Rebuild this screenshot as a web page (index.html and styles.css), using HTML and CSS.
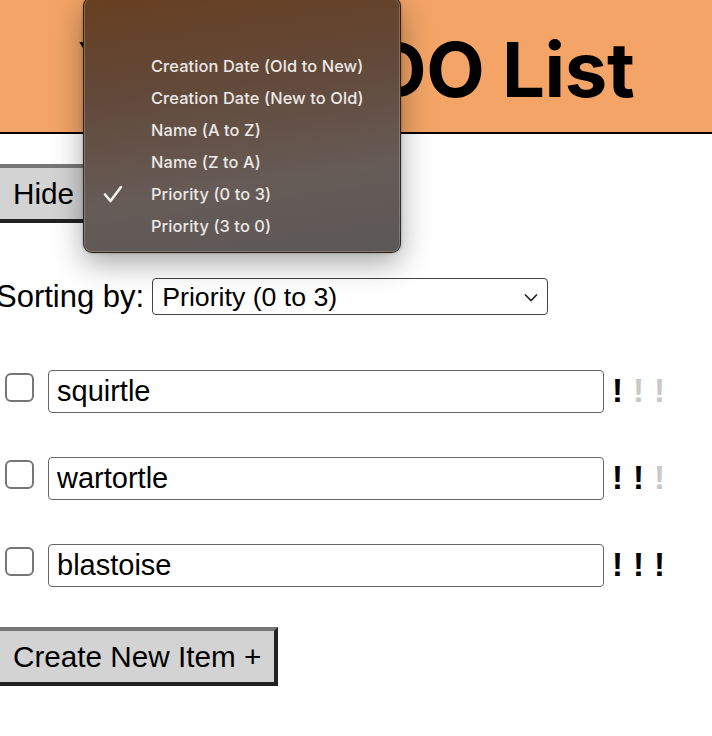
FILE: index.html
```html
<!DOCTYPE html>
<html lang="en">
<head>
<meta charset="utf-8">
<title>Your TODO List</title>
<link rel="stylesheet" href="styles.css">
</head>
<body>
<header class="header">
  <h1 class="title">Your TODO List</h1>
</header>
<main class="main">
  <button class="btn btn-hide">Hide Completed</button>
  <div class="sort-row">
    <label class="sort-label" for="sort">Sorting by:</label>
    <div class="select-wrap">
      <select id="sort" class="select">
        <option>Creation Date (Old to New)</option>
        <option>Creation Date (New to Old)</option>
        <option>Name (A to Z)</option>
        <option>Name (Z to A)</option>
        <option selected>Priority (0 to 3)</option>
        <option>Priority (3 to 0)</option>
      </select>
      <svg class="chevron" width="14" height="9" viewBox="0 0 14 9"><path d="M1 1.5 L7 7.5 L13 1.5" fill="none" stroke="#222" stroke-width="1.6"/></svg>
    </div>
  </div>
  <ul class="list">
    <li class="item">
      <input type="checkbox" class="check">
      <input type="text" class="text" value="squirtle">
      <span class="prio"><b class="mark on">!</b><b class="mark">!</b><b class="mark">!</b></span>
    </li>
    <li class="item">
      <input type="checkbox" class="check">
      <input type="text" class="text" value="wartortle">
      <span class="prio"><b class="mark on">!</b><b class="mark on">!</b><b class="mark">!</b></span>
    </li>
    <li class="item">
      <input type="checkbox" class="check">
      <input type="text" class="text" value="blastoise">
      <span class="prio"><b class="mark on">!</b><b class="mark on">!</b><b class="mark on">!</b></span>
    </li>
  </ul>
  <button class="btn btn-create">Create New Item +</button>
</main>
<div class="menu" role="listbox">
  <div class="menu-item"><span class="tick"></span>Creation Date (Old to New)</div>
  <div class="menu-item"><span class="tick"></span>Creation Date (New to Old)</div>
  <div class="menu-item"><span class="tick"></span>Name (A to Z)</div>
  <div class="menu-item"><span class="tick"></span>Name (Z to A)</div>
  <div class="menu-item"><span class="tick"><svg width="20" height="18" viewBox="0 0 20 18"><path d="M2 9.5 L7.5 16 L18 2" fill="none" stroke="#f2efec" stroke-width="2.6" stroke-linecap="round" stroke-linejoin="round"/></svg></span>Priority (0 to 3)</div>
  <div class="menu-item"><span class="tick"></span>Priority (3 to 0)</div>
</div>
</body>
</html>
```
FILE: styles.css
```css
html, body {
  margin: 0;
  padding: 0;
  background: #fff;
  overflow: hidden;
  width: 712px;
  height: 736px;
}
body {
  position: relative;
  font-family: "Liberation Sans", Arial, sans-serif;
  color: #000;
}
.header {
  height: 134px;
  background: #f3a466;
  border-bottom: 2px solid #000;
  display: flex;
  align-items: center;
  justify-content: center;
  padding-top: 6px;
  box-sizing: border-box;
}
.title {
  margin: 0;
  font-family: Inter, "Noto Sans", sans-serif;
  font-weight: 700;
  font-size: 76px;
  line-height: 1;
  letter-spacing: -0.4px;
  white-space: nowrap;
}
.main {
  margin-left: -4px;
  padding-top: 30px;
  display: flex;
  flex-direction: column;
  align-items: flex-start;
}
.btn {
  font-family: "Liberation Sans", Arial, sans-serif;
  font-size: 29.7px;
  line-height: 33px;
  padding: 9px 13px;
  background: #d3d3d3;
  color: #000;
  border: 4px solid;
  border-color: #777 #222 #222 #777;
  white-space: nowrap;
}
.sort-row {
  margin-top: 55px;
  display: flex;
  align-items: center;
  gap: 8px;
}
.sort-label {
  font-size: 31px;
}
.select-wrap {
  position: relative;
}
.select {
  appearance: none;
  -webkit-appearance: none;
  width: 396px;
  height: 37px;
  box-sizing: border-box;
  border: 1px solid #444;
  border-radius: 4px;
  background: #fff;
  font-family: "Liberation Sans", Arial, sans-serif;
  font-size: 26.7px;
  padding: 0 0 0 9px;
  color: #000;
}
.chevron {
  position: absolute;
  right: 10px;
  top: 15px;
  pointer-events: none;
}
.list {
  list-style: none;
  margin: 55px 0 0 0;
  padding: 0;
  display: flex;
  flex-direction: column;
  gap: 44px;
}
.item {
  display: flex;
  align-items: flex-start;
}
.check {
  appearance: none;
  -webkit-appearance: none;
  width: 29px;
  height: 29px;
  margin: 3px 0 0 9px;
  box-sizing: border-box;
  border: 2px solid #767676;
  border-radius: 6px;
  background: #fff;
}
.text {
  margin-left: 14px;
  width: 556px;
  height: 43px;
  box-sizing: border-box;
  border: 1.5px solid #666;
  border-radius: 4px;
  font-family: "Liberation Sans", Arial, sans-serif;
  font-size: 29px;
  padding: 0 0 0 8px;
  color: #000;
}
.prio {
  margin-left: 8px;
  display: flex;
  gap: 10px;
  font-family: "Liberation Sans", Arial, sans-serif;
  font-size: 33px;
  line-height: 42px;
}
.mark {
  color: #c8c8c8;
  font-weight: 700;
}
.mark.on {
  color: #000;
}
.btn-create {
  margin-top: 40px;
}
.menu {
  position: absolute;
  left: 83px;
  top: -3px;
  width: 318px;
  height: 256px;
  box-sizing: border-box;
  padding-top: 52px;
  border-radius: 9px;
  background: linear-gradient(172deg, #683f20 0%, #62493a 35%, #665b56 70%, #5b5858 100%);
  border: 1px solid rgba(0, 0, 0, 0.55);
  box-shadow: inset 0 0 0 1px rgba(255, 255, 255, 0.22), 0 10px 30px rgba(0, 0, 0, 0.35), 0 0 3px rgba(0, 0, 0, 0.25);
  font-family: Inter, "Noto Sans", sans-serif;
  font-size: 16.4px;
  font-weight: 500;
  letter-spacing: 0.1px;
  color: #ece8e5;
}
.menu-item {
  height: 32px;
  display: flex;
  align-items: center;
  white-space: nowrap;
}
.tick {
  width: 67px;
  height: 20px;
  display: flex;
  align-items: center;
  padding-left: 19px;
  box-sizing: border-box;
}
```
